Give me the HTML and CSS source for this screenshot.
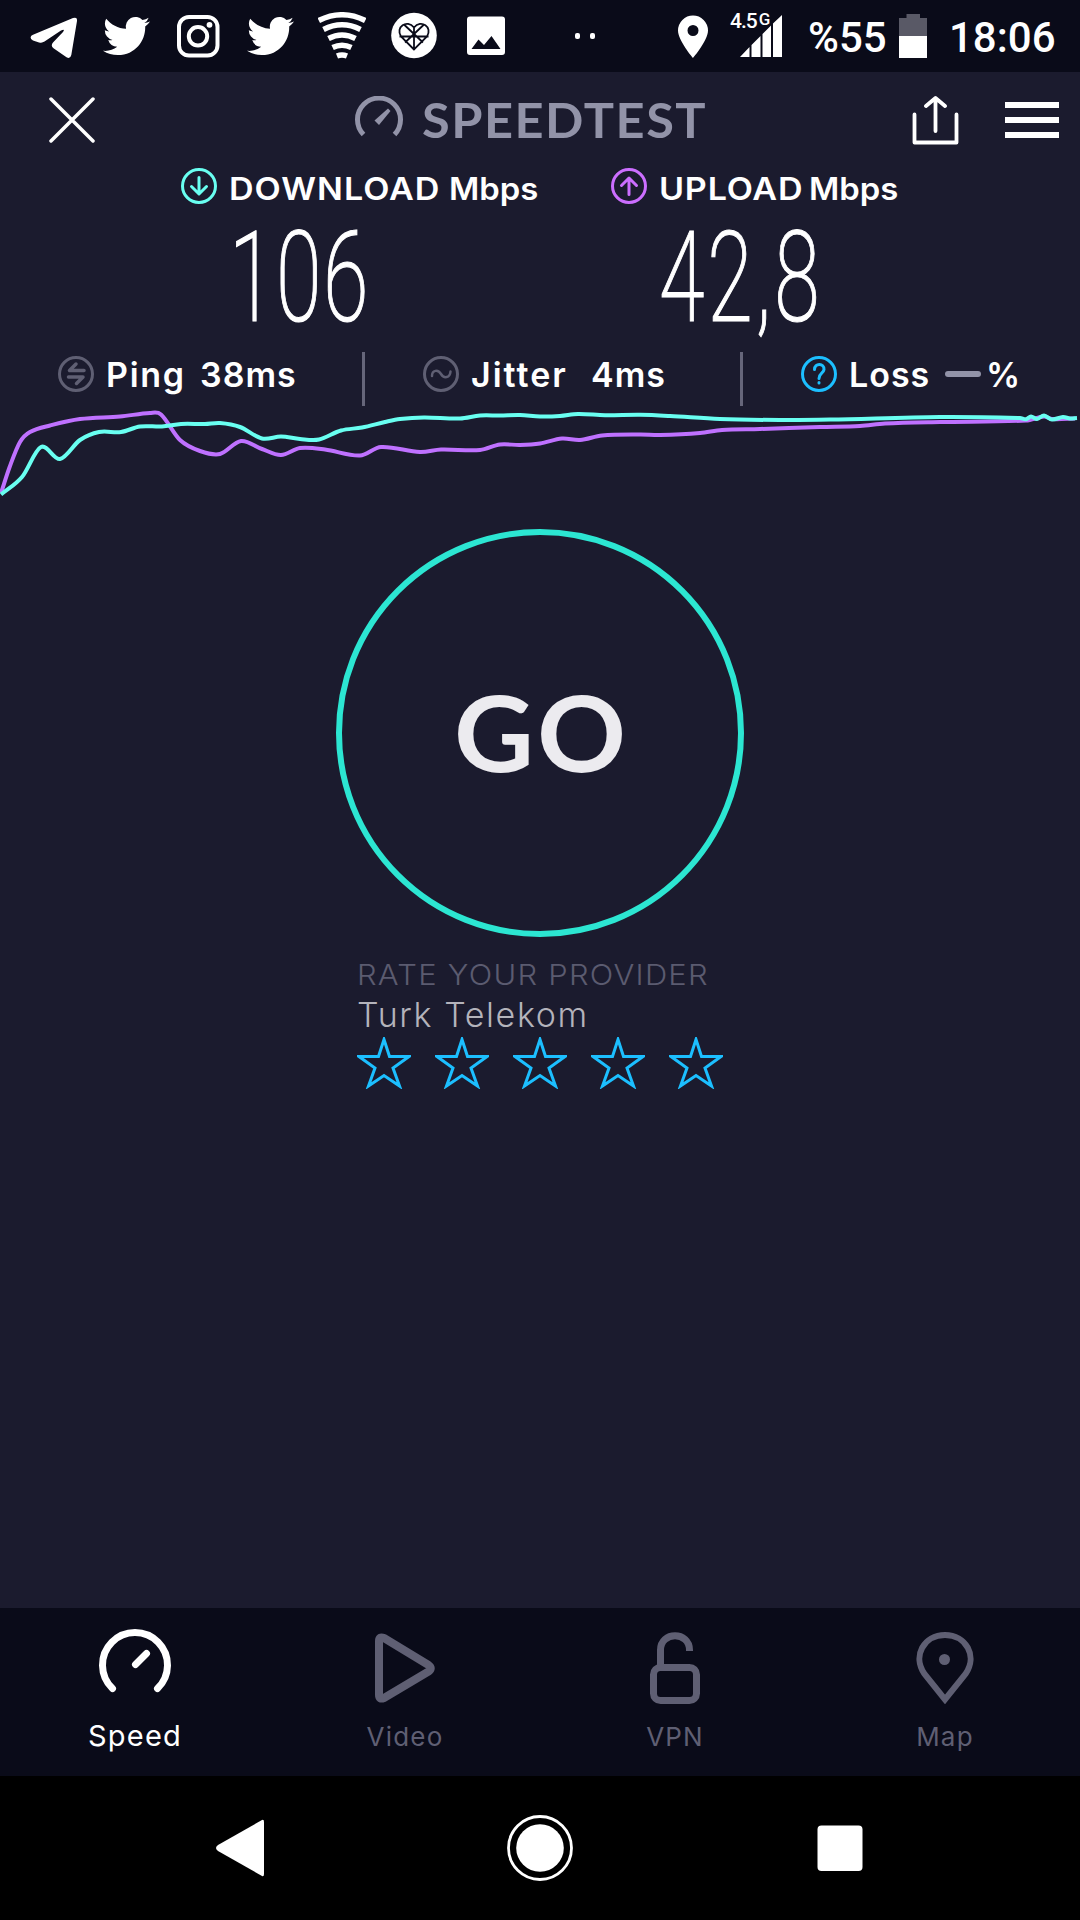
FILE: index.html
```html
<!DOCTYPE html>
<html lang="en">
<head>
    <meta charset="UTF-8">
    <title>Speedtest</title>
    <link rel="stylesheet" href="styles.css">
</head>
<body>
    <svg class="defs" width="0" height="0">
        <symbol id="twitter" viewBox="0 0 24 24">
            <path d="M23.953 4.57a10 10 0 01-2.825.775 4.958 4.958 0 002.163-2.723c-.951.555-2.005.959-3.127 1.184a4.92 4.92 0 00-8.384 4.482C7.69 8.095 4.067 6.13 1.64 3.162a4.822 4.822 0 00-.666 2.475c0 1.71.87 3.213 2.188 4.096a4.904 4.904 0 01-2.228-.616v.06a4.923 4.923 0 003.946 4.827 4.996 4.996 0 01-2.212.085 4.936 4.936 0 004.604 3.417 9.867 9.867 0 01-6.102 2.105c-.39 0-.779-.023-1.17-.067a13.995 13.995 0 007.557 2.209c9.053 0 13.998-7.496 13.998-13.985 0-.21 0-.42-.015-.63A9.935 9.935 0 0024 4.59z"/>
        </symbol>
        <symbol id="star" viewBox="0 0 54 52">
            <path d="M27 2.5L32.5 19.5H52L36 31L42.5 49L27 38.5L11.5 49L18 31L2 19.5H21.5Z" fill="none" stroke="#1cbfff" stroke-width="3"/>
        </symbol>
    </svg>

    <div class="status-bar">
        <div class="notifications">
            <svg viewBox="0 0 48 48"><path d="M.6 25.3Q.5 27.8 3 28.5L9 30.4Q12 31.3 14.5 29.6L31 18.5Q35.5 16.5 33 20L23 30.5Q20.3 33.5 23.5 36.3L36.5 45.2Q40.3 47.3 41.3 43L47 9Q47.5 4.5 43 6L3 22.8Q.8 23.7.6 25.3Z"/></svg>
            <svg viewBox="0 0 48 48"><use href="#twitter" x="1" y="0" width="47" height="48"/></svg>
            <svg viewBox="0 0 48 48">
                <g fill="none" stroke="#fff" stroke-width="4">
                    <rect x="5" y="5" width="38.5" height="38.5" rx="10"/>
                    <circle cx="24" cy="24.3" r="9.2"/>
                </g>
                <circle cx="35.5" cy="12.8" r="2.9"/>
            </svg>
            <svg viewBox="0 0 48 48"><use href="#twitter" x="1" y="0" width="47" height="48"/></svg>
            <svg viewBox="0 0 48 48">
                <g fill="none" stroke="#fff" stroke-width="5.5">
                    <path d="M.8 8.5Q24-3 47.2 8.5"/>
                    <path d="M5.5 17.5Q24 8 42.5 17.5"/>
                    <path d="M10.5 26.5Q24 19.5 37.5 26.5"/>
                    <path d="M14.6 35.5Q24 31 33.4 35.5"/>
                    <path d="M19 44Q24 42 29 44"/>
                </g>
            </svg>
            <svg viewBox="0 0 48 48">
                <circle cx="24" cy="23.5" r="22.8"/>
                <path d="M24 37.5L11 24.5C5 15 17 7 24 15.5C31 7 43 15 37 24.5ZM24 15.5V37.5M9.5 24.5H38.5M14.5 13L33 30.5M33.5 13L15 30.5" fill="none" stroke="#0a0b19" stroke-width="1.8"/>
            </svg>
            <svg viewBox="0 0 48 48"><path fill-rule="evenodd" d="M8 4.5H40Q43 4.5 43 7.5V40Q43 43 40 43H8Q5 43 5 40V7.5Q5 4.5 8 4.5ZM9.5 37H38.5L29.5 24L22 33L16.5 27.5Z"/></svg>
            <span class="dots"><i></i><i></i></span>
        </div>
        <svg class="location" viewBox="0 0 30 42"><path fill-rule="evenodd" d="M15 0A15 15 0 0 0 0 15C0 25 15 42.5 15 42.5S30 25 30 15A15 15 0 0 0 15 0ZM15 9.5A5.5 5.5 0 1 1 15 20.5A5.5 5.5 0 1 1 15 9.5Z"/></svg>
        <span class="network">4.5<sup>G</sup></span>
        <svg class="signal" viewBox="0 0 42 42"><path d="M0 42L9.5 32V42ZM11.5 30L20.5 21V42H11.5ZM22.5 19L31 10.5V42H22.5ZM33 8.5L42 0V42H33Z"/></svg>
        <span class="battery-text">%55</span>
        <svg class="battery" viewBox="0 0 28 44"><path d="M7.5 0H21V4H28V22H0V4H7.5Z" fill="#595966"/><path d="M0 22H28V44H0Z"/></svg>
        <span class="clock">18:06</span>
    </div>

    <header class="header">
        <svg class="close" viewBox="0 0 46 46"><path d="M2 2L44 44M44 2L2 44"/></svg>
        <div class="brand">
            <svg viewBox="0 0 48 48">
                <path d="M8.5 38.5A21.5 21.5 0 1 1 39.5 38.5" fill="none" stroke="#9293a8" stroke-width="5"/>
                <path d="M33 12.5L35.5 15L24 29L19.5 24.5Z" fill="#9293a8"/>
            </svg>
            <h1>SPEEDTEST</h1>
        </div>
        <svg class="share" viewBox="0 0 48 50"><path d="M2.5 18.5V46.5H44.5V18.5M23.5 35V3M14 10L23.5 2L33 10"/></svg>
        <div class="menu"><i></i><i></i><i></i></div>
    </header>

    <section class="results">
        <div class="result">
            <div class="caption">
                <svg viewBox="0 0 36 36" stroke="#69fff1"><circle cx="18" cy="18" r="16.5"/><path d="M18 9.5V25.5M10.5 18.5L18 26L25.5 18.5"/></svg>
                <span class="download">DOWNLOAD</span><span class="unit">Mbps</span>
            </div>
            <div class="value">106</div>
        </div>
        <div class="result">
            <div class="caption">
                <svg viewBox="0 0 36 36" stroke="#cc6eff"><circle cx="18" cy="18" r="16.5"/><path d="M18 26.5V10.5M10.5 17.5L18 10L25.5 17.5"/></svg>
                <span class="upload">UPLOAD</span><span class="unit">Mbps</span>
            </div>
            <div class="value decimal">42,8</div>
        </div>
    </section>

    <section class="stats">
        <div class="stat ping">
            <svg viewBox="0 0 36 36" stroke="#5f5f73"><circle cx="18" cy="18" r="16.5"/><path d="M18 8L11.5 14.5H26M10.5 21H25L18.5 27.5" stroke-width="3.5"/></svg>
            <span class="name">Ping</span><span class="amount">38ms</span>
        </div>
        <div class="stat jitter">
            <svg viewBox="0 0 36 36" stroke="#5f5f73"><circle cx="18" cy="18" r="16.5"/><path d="M9 20C9 14 15 13 18 18S27 22 27.5 15.5" stroke-width="2.5"/></svg>
            <span class="name">Jitter</span><span class="amount">4ms</span>
        </div>
        <div class="stat loss">
            <svg viewBox="0 0 36 36" stroke="#1cbfff"><circle cx="18" cy="18" r="16.5"/><path d="M13.5 13.5C13.5 6.5 23.5 7 23 13.5C22.5 17.5 18 17 18 22.5M18 26.5V27" stroke-width="3"/></svg>
            <span class="name">Loss</span><i class="dash"></i><span class="percent">%</span>
        </div>
    </section>

    <svg class="chart" viewBox="0 405 1080 94">
        <path id="uploadLine" stroke="#bf71ff"/>
        <path id="downloadLine" stroke="#69fff1"/>
    </svg>

    <button class="go"><span>GO</span></button>

    <section class="rating">
        <div class="rate-title">RATE YOUR PROVIDER</div>
        <div class="provider">Turk Telekom</div>
        <div class="stars">
            <svg><use href="#star"/></svg>
            <svg><use href="#star"/></svg>
            <svg><use href="#star"/></svg>
            <svg><use href="#star"/></svg>
            <svg><use href="#star"/></svg>
        </div>
    </section>

    <nav class="tabs">
        <div class="tab active">
            <svg viewBox="0 0 76 76"><path d="M15.5 60.5A32.5 32.5 0 1 1 60.5 60.5M38.5 36.5L49.5 25.5"/></svg>
            <span>Speed</span>
        </div>
        <div class="tab">
            <svg viewBox="0 0 76 76"><path stroke-width="8" d="M12 13Q12 8 17 10L61.5 37Q66 40 61.5 43.5L17 70Q12 72 12 67Z"/></svg>
            <span>Video</span>
        </div>
        <div class="tab">
            <svg viewBox="0 0 76 76"><path class="butt" d="M23.5 37V22C23.5 3 52.5 3 52.5 22V23"/><rect x="16.5" y="39.5" width="43" height="33" rx="7"/></svg>
            <span>VPN</span>
        </div>
        <div class="tab">
            <svg viewBox="0 0 76 76"><path class="butt" stroke-width="6" d="M38 71.500L17.500 46C5 28 17 7 38 7S71 28 58.500 46Z"/><circle class="dot" cx="37.500" cy="31.500" r="5.500"/></svg>
            <span>Map</span>
        </div>
    </nav>

    <div class="system-nav">
        <svg viewBox="0 0 66 66"><path d="M55 5Q57 4 57 7V59Q57 62 55 61L11 36Q7 33 11 30Z"/></svg>
        <svg viewBox="0 0 66 66"><circle cx="33" cy="33" r="31.5" fill="none" stroke="#fff" stroke-width="2.8"/><circle cx="33" cy="33" r="23.8"/></svg>
        <svg viewBox="0 0 66 66"><rect x="10.5" y="10.5" width="45" height="45.5" rx="4"/></svg>
    </div>

    <script src="script.js"></script>
</body>
</html>
```

FILE: styles.css
```css
* {
    box-sizing: border-box;
}
body {
    margin: 0;
    width: 1080px;
    height: 1920px;
    display: flex;
    flex-direction: column;
    overflow: hidden;
    background: #1b1b2e;
    color: #fff;
    font-family: Inter, Lato, sans-serif;
}
svg {
    display: block;
    flex: none;
    fill: #fff;
}
span {
    white-space: nowrap;
}
.defs {
    position: absolute;
}

/* Android status bar */
.status-bar {
    display: flex;
    align-items: flex-start;
    height: 72px;
    padding-left: 30px;
    background: #0a0b19;
    font-family: Roboto, sans-serif;
    font-weight: 500;
}
.notifications {
    display: flex;
    gap: 24px;
    width: 648px;
    padding-top: 12px;
}
.notifications svg {
    width: 48px;
    height: 48px;
}
.dots {
    display: flex;
    gap: 10px;
    padding: 21px 0 0 41px;
}
.dots i {
    width: 5px;
    height: 6px;
    border-radius: 2px;
    background: #fff;
}
.location {
    width: 30px;
    height: 43px;
    margin-top: 15px;
}
.network {
    width: 32px;
    margin: 9px 0 0 22px;
    font-size: 21px;
    line-height: 24px;
    letter-spacing: -1px;
}
.network sup {
    margin-left: 2px;
    font-size: 17px;
    line-height: 0;
    vertical-align: 3px;
}
.signal {
    width: 42px;
    height: 42px;
    margin: 15px 28px 0 -22px;
}
.battery-text {
    width: 89px;
    margin-top: 13px;
    font-size: 42px;
    line-height: 50px;
    text-indent: -2px;
}
.battery {
    width: 28px;
    height: 44px;
    margin-top: 14px;
}
.clock {
    margin: 13px 0 0 22px;
    font-size: 42px;
    line-height: 50px;
}

/* App header */
.header {
    display: flex;
    align-items: center;
    height: 96px;
    padding-left: 49px;
}
.close {
    width: 46px;
    height: 46px;
    stroke: #fff;
    stroke-width: 3.5;
    stroke-linecap: round;
}
.brand {
    display: flex;
    align-items: center;
    width: 556px;
    margin-left: 260px;
}
.brand svg {
    width: 48px;
    height: 48px;
}
.brand h1 {
    margin: 0 0 0 19px;
    color: #9293a8;
    font-family: Lato, sans-serif;
    font-size: 47px;
    line-height: 60px;
    font-weight: 700;
    letter-spacing: 1.4px;
    transform: scaleX(1.075);
    transform-origin: left;
}
.share {
    width: 48px;
    height: 50px;
    margin: 1px -1px 0 1px;
    fill: none;
    stroke: #fff;
    stroke-width: 3.8;
    stroke-linecap: round;
    stroke-linejoin: round;
}
.menu {
    display: grid;
    gap: 9px;
    margin-left: 46px;
}
.menu i {
    width: 54px;
    height: 6px;
    background: #fff;
}

/* Download and upload */
.results {
    display: grid;
    grid-template-columns: 430px 430px;
    height: 184px;
    padding-left: 181px;
}
.caption {
    display: flex;
    height: 36px;
    font-size: 31px;
    line-height: 41px;
    font-weight: 600;
}
.caption svg,
.stat svg {
    width: 36px;
    height: 36px;
    fill: none;
    stroke-width: 3;
    stroke-linecap: round;
    stroke-linejoin: round;
}
.caption span {
    margin-left: 12px;
    transform: scaleX(1.1);
    transform-origin: left;
}
.caption .download {
    width: 211px;
    letter-spacing: 0.9px;
}
.caption .upload {
    width: 141px;
    letter-spacing: 0.7px;
}
.caption .unit {
    margin-left: 9px;
    transform: scaleX(1.06);
}
.value {
    width: 300px;
    margin-left: 48px;
    font-family: Roboto, sans-serif;
    font-size: 127px;
    line-height: 148px;
    font-weight: 200;
    letter-spacing: 2.5px;
    -webkit-text-stroke: 1.2px #fff;
    transform: scaleX(0.65);
    transform-origin: left;
}
.value.decimal {
    letter-spacing: 4.5px;
}

/* Ping, jitter and loss */
.stats {
    display: flex;
    height: 54px;
}
.stat {
    display: flex;
    padding-top: 4px;
    font-size: 34px;
    line-height: 38px;
    font-weight: 600;
    letter-spacing: 1px;
}
.ping {
    width: 365px;
    padding-left: 58px;
    border-right: 3px solid #66667a;
}
.jitter {
    width: 378px;
    padding-left: 58px;
    border-right: 3px solid #66667a;
}
.loss {
    padding-left: 58px;
}
.stat .name {
    width: 94px;
    margin-left: 12px;
    letter-spacing: 1.7px;
}
.jitter .name {
    width: 120px;
    letter-spacing: 2px;
}
.loss .name {
    letter-spacing: 1px;
}
.dash {
    width: 36px;
    height: 6px;
    margin: 15px 5px 0 2px;
    border-radius: 3px;
    background: #9293a8;
}
.chart {
    width: 1080px;
    height: 94px;
    fill: none;
    stroke-width: 4;
}

/* GO button */
.go {
    width: 408px;
    height: 408px;
    margin: 29px auto 0;
    padding: 0 0 4px;
    border: 6px solid #2ce6d2;
    border-radius: 50%;
    background: none;
    color: #ecebef;
    font-family: Lato, sans-serif;
    font-size: 106px;
    line-height: 120px;
    font-weight: 700;
}
.go span {
    display: block;
    letter-spacing: 3px;
    text-indent: 3px;
    transform: scaleX(1.04);
}

/* Provider rating */
.rating {
    padding: 20px 0 0 357px;
    font-weight: 300;
}
.rate-title {
    height: 38px;
    color: #5b5b70;
    font-size: 29px;
    line-height: 35px;
    letter-spacing: 1.2px;
    transform: scaleX(1.065);
    transform-origin: left;
}
.provider {
    height: 42px;
    color: #b4b3bb;
    font-size: 34px;
    line-height: 40px;
    letter-spacing: 1.6px;
}
.stars {
    display: flex;
    gap: 24px;
}
.stars svg {
    width: 54px;
    height: 52px;
}

/* Bottom tabs */
.tabs {
    display: grid;
    grid-template-columns: repeat(4, 270px);
    height: 168px;
    margin-top: auto;
    background: #0a0b19;
}
.tab {
    display: flex;
    flex-direction: column;
    align-items: center;
    padding-top: 20px;
    color: #5f5f73;
    font-size: 26px;
    line-height: 36px;
    letter-spacing: 1.2px;
}
.tab svg {
    width: 76px;
    height: 76px;
    margin-bottom: 15px;
    fill: none;
    stroke: #5f5f73;
    stroke-width: 7;
    stroke-linecap: round;
    stroke-linejoin: round;
}
.tab .butt {
    stroke-linecap: butt;
    stroke-linejoin: miter;
}
.tab .dot {
    fill: #5f5f73;
    stroke: none;
}
.tab.active {
    color: #fff;
    font-size: 29px;
}
.tab.active svg {
    margin-bottom: 14px;
    stroke: #fff;
}

/* Android navigation */
.system-nav {
    display: flex;
    justify-content: center;
    align-items: center;
    gap: 234px;
    height: 144px;
    background: #000;
}
.system-nav svg {
    width: 66px;
    height: 66px;
}
```

FILE: script.js
```js
const download = [[1, 493.5], [22, 476], [41, 446], [60, 458], [80, 439], [99, 431], [121, 431], [140, 425.5], [162, 425.5], [181, 423], [205, 423], [220, 422], [240, 426], [262, 437.5], [281, 435.5], [300, 438], [319, 438.5], [341, 429.5], [362, 426.5], [385, 421], [400, 418], [424, 416.5], [460, 417.5], [480, 414.5], [500, 414.5], [520, 414], [540, 415.5], [560, 415], [578, 413], [605, 414.2], [640, 413.8], [670, 415], [720, 418], [780, 419], [830, 418.6], [940, 416], [1020, 417], [1026, 418.2], [1031, 415.5], [1037, 418], [1044, 414.5], [1052, 418.5], [1063, 416], [1070, 417.5], [1077, 417]];
const upload = [[1, 492], [10, 465], [20, 441], [30, 431], [50, 424.5], [80, 418], [120, 415.5], [150, 412], [161, 413.5], [180, 439], [200, 450], [220, 453], [241, 440], [262, 448], [281, 454], [300, 447], [325, 448.5], [360, 454.5], [381, 446], [420, 451], [441, 448.5], [480, 449], [500, 443.5], [520, 444], [540, 442.5], [562, 437.5], [580, 439], [602, 434.5], [640, 433.5], [660, 434], [700, 432], [722, 429], [760, 428], [820, 426], [860, 425], [885, 422.5], [940, 421], [1026, 419.5], [1044, 415.5], [1052, 418], [1075, 417.5]];

// smooth curve through all the points
function linePath(points) {
    let d = 'M' + points[0];
    for (let i = 0; i < points.length - 1; i++) {
        const p0 = points[i - 1] || points[i];
        const p1 = points[i];
        const p2 = points[i + 1];
        const p3 = points[i + 2] || p2;
        const dx = (p2[0] - p1[0]) / 3;
        const s1 = (p2[1] - p0[1]) / (p2[0] - p0[0]);
        const s2 = (p3[1] - p1[1]) / (p3[0] - p1[0]);
        d += `C${p1[0] + dx},${p1[1] + s1 * dx} ${p2[0] - dx},${p2[1] - s2 * dx} ${p2}`;
    }
    return d;
}

document.getElementById('downloadLine').setAttribute('d', linePath(download));
document.getElementById('uploadLine').setAttribute('d', linePath(upload));
```
